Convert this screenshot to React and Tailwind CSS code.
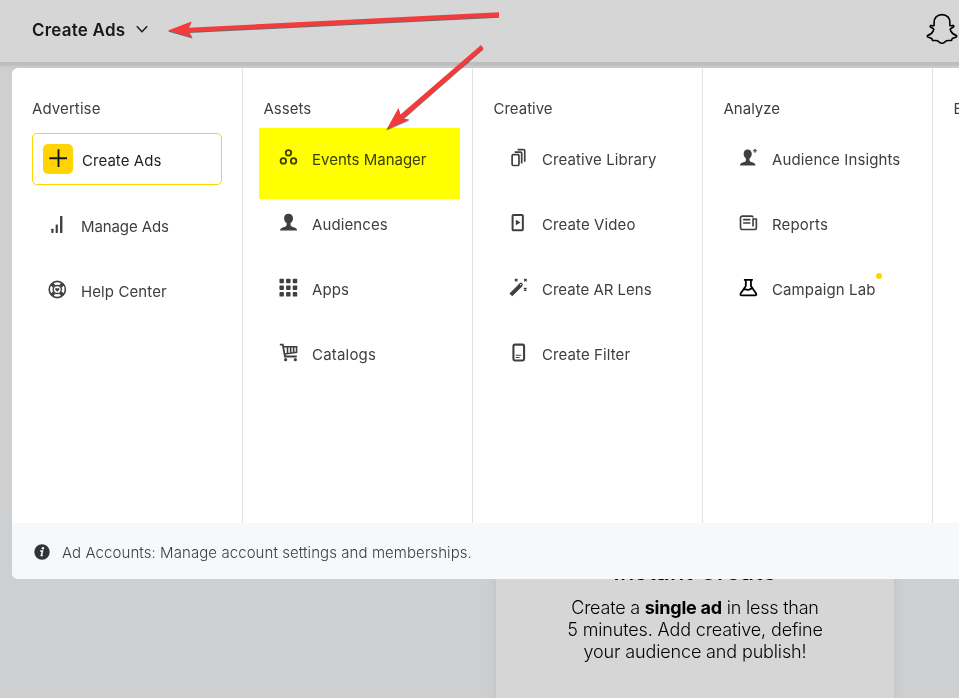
import React from "react";

const stroke = { fill: "none", stroke: "currentColor", strokeWidth: 1.6 };

function Icon({ children, className = "" }) {
  return (
    <svg viewBox="0 0 20 20" className={"h-[19px] w-5 shrink-0 " + className} fill="currentColor">
      {children}
    </svg>
  );
}

const BarsIcon = () => (
  <Icon>
    <rect x="4" y="14.6" width="2.300" height="4.400" rx=".5" />
    <rect x="8.600" y="10" width="2.300" height="9" rx=".5" />
    <rect x="13.200" y="1" width="2.500" height="18" rx=".6" />
  </Icon>
);

const HelpIcon = () => (
  <Icon>
    <circle cx="10.300" cy="10" r="8.500" {...stroke} strokeWidth="1.700" />
    <circle cx="10.300" cy="10" r="4.300" {...stroke} strokeWidth="1.500" />
    <path
      d="M4.600 4.300l2.300 2.300M16 4.300l-2.300 2.300M4.600 15.700l2.300-2.300M16 15.700l-2.300-2.300"
      stroke="currentColor"
      strokeWidth="3.800"
    />
    <path d="M10.300 12.400 8.200 10.200c-.8-1.300 1.200-2.400 2.100-1 .9-1.400 2.900-.3 2.100 1z" />
  </Icon>
);

const EventsIcon = () => (
  <Icon>
    <g {...stroke} strokeWidth="1.900">
      <circle cx="10.500" cy="5.100" r="2.900" />
      <circle cx="5.100" cy="13.600" r="2.900" />
      <circle cx="15.900" cy="13.600" r="2.900" />
    </g>
  </Icon>
);

const personPath =
  "M9.900 1c-3 0-4.600 1.900-4.600 4.700 0 2.300 1.100 4.200 2.600 5.200v2.100c0 .7-.4 1.200-1.100 1.500l-3.600 1.300C1.900 16.300 1.200 17.100 1 18.700h18c-.2-1.600-.9-2.400-2.200-2.900l-3.600-1.300c-.7-.3-1.100-.8-1.100-1.500v-2.100c1.500-1 2.600-2.900 2.600-5.200C14.600 2.900 12.900 1 9.900 1z";

const PersonIcon = () => (
  <Icon>
    <path d={personPath} transform="translate(.6 -.3)" />
  </Icon>
);

const InsightsIcon = () => (
  <Icon>
    <path d={personPath} transform="translate(.6 .6) scale(.91 .95)" />
    <path d="M17.300.7v4.400M15.100 2.900h4.400" stroke="currentColor" strokeWidth="1.300" />
  </Icon>
);

const AppsIcon = () => (
  <Icon>
    {[0.8, 7.8, 14.8].map((y) =>
      [1, 8, 15].map((x) => <rect key={x + "-" + y} x={x} y={y} width="4.700" height="4.700" rx=".9" />)
    )}
  </Icon>
);

const CartIcon = () => (
  <Icon>
    <path d="M1.400 1.700h3.100l2.300 12.500h12.400" {...stroke} strokeWidth="1.900" />
    <path d="M5 4h14v5.800L6.200 11.600M9.500 4v6.600M12.800 4v6.200M15.900 4v5.800" {...stroke} strokeWidth="1.700" />
    <circle cx="7.500" cy="17.600" r="1.700" />
    <circle cx="17.700" cy="17.600" r="1.700" />
  </Icon>
);

const LibraryIcon = () => (
  <Icon>
    <g {...stroke} strokeWidth="1.800">
      <rect x="3.800" y="7" width="7.200" height="11.400" rx="1.200" />
      <path d="M6.500 4.400h6.100c.8 0 1.300.4 1.300 1.200v10.600" />
      <path d="M9.600 1.700h6.200c.8 0 1.300.4 1.300 1.200v11.600" />
    </g>
  </Icon>
);

const VideoIcon = () => (
  <Icon>
    <rect x="4.300" y="2" width="10.800" height="16.200" rx="1" {...stroke} strokeWidth="2.100" />
    <path d="M7.700 7.200v5.800l5-2.900z" />
  </Icon>
);

const WandIcon = () => (
  <Icon>
    <path d="M2.500 17.700 13.300 7" stroke="currentColor" strokeWidth="4.200" />
    <path d="M11 7.200l2-1.900 1.700 1.600-2 2z" fill="#fff" stroke="currentColor" strokeWidth="1.100" />
    <path
      d="M6.800.9l2.600 2.600M9.400.9 6.800 3.500M16.500.9l2.600 2.600M19.100.9l-2.600 2.600M16.300 10.600l2.600 2.600M18.900 10.600l-2.600 2.600"
      stroke="currentColor"
      strokeWidth="1.400"
    />
  </Icon>
);

const FilterIcon = () => (
  <Icon>
    <rect x="5.200" y="1.700" width="11.200" height="16.700" rx="1.500" {...stroke} strokeWidth="2.200" />
    <path d="M7.700 13h5.600M7.700 15.300h4" stroke="currentColor" strokeWidth="1.100" />
  </Icon>
);

const ReportsIcon = () => (
  <Icon>
    <g {...stroke} strokeWidth="1.700" transform="translate(0 .6)">
      <path d="M15.300 4.200c0-1-.6-1.500-1.500-1.500H4.200c-1.300 0-2.100.8-2.100 2v10c0 1.300.8 2.100 2.100 2.100h12.600c1.300 0 2-.7 2-2V5.700h-3.500v8" />
      <path d="M4.900 6.400h7.600M4.900 9.900h7.600" />
    </g>
  </Icon>
);

const FlaskIcon = () => (
  <Icon className="text-black">
    <path
      d="M5.700 1.900h9.400M7.700 2v6.400L2.300 16.200c-.7 1.200-.2 2.100 1.100 2.100h14c1.300 0 1.800-.9 1.100-2.100l-5.400-7.800V2M5.800 12.400c1.800-1.300 3 .1 4.600 0 1.400-.1 2.100-1.600 4.100-1.500"
      {...stroke}
      strokeWidth="1.900"
    />
  </Icon>
);

const columns = [
  {
    title: "Assets",
    items: [
      { label: "Events Manager", icon: EventsIcon },
      { label: "Audiences", icon: PersonIcon, track: "tracking-[0.1px]" },
      { label: "Apps", icon: AppsIcon, track: "tracking-[0.1px]" },
      { label: "Catalogs", icon: CartIcon, track: "tracking-[0.2px]" },
    ],
  },
  {
    title: "Creative",
    items: [
      { label: "Creative Library", icon: LibraryIcon, track: "tracking-[0.1px]" },
      { label: "Create Video", icon: VideoIcon, track: "tracking-[0.1px]" },
      { label: "Create AR Lens", icon: WandIcon },
      { label: "Create Filter", icon: FilterIcon, track: "tracking-[0.1px]" },
    ],
  },
  {
    title: "Analyze",
    items: [
      { label: "Audience Insights", icon: InsightsIcon, track: "tracking-[0.12px]" },
      { label: "Reports", icon: ReportsIcon, track: "tracking-[0.15px]" },
      { label: "Campaign Lab", icon: FlaskIcon, track: "tracking-[0.1px]", dot: true },
    ],
  },
];

function MenuItem({ label, icon: Glyph, track = "", dot }) {
  return (
    <li className="flex h-[65px] items-center pl-[15px]">
      <span className="flex pb-1">
        <Glyph />
      </span>
      <span className={"relative mt-0.5 ml-[14px] whitespace-nowrap " + track}>
        {label}
        {dot && <span className="absolute -top-[6px] -right-[7px] h-1.5 w-1.5 rounded-full bg-[#ffd400]" />}
      </span>
    </li>
  );
}

function Column({ title, items }) {
  return (
    <section className="w-[230px] shrink-0 border-r border-[#e1e3e5] pl-5 pt-[30px]">
      <h2 className="h-[29px] pl-[0.5px] leading-[21px]">{title}</h2>
      <ul>
        {items.map((item) => (
          <MenuItem key={item.label} {...item} />
        ))}
      </ul>
    </section>
  );
}

function Arrow({ className, points, viewBox }) {
  return (
    <svg className={"pointer-events-none absolute drop-shadow-[0.5px_1px_0.5px_rgba(0,0,0,0.5)] " + className} viewBox={viewBox}>
      <polygon points={points} fill="#f43b3b" />
    </svg>
  );
}

export default function App() {
  return (
    <div className="relative flex h-[698px] w-[959px] flex-col overflow-hidden bg-[#cecfd1] font-['Inter','Liberation_Sans',sans-serif] text-[15px] text-[#3c4043]">
      <header className="z-0 flex h-[62px] shrink-0 items-center bg-[#d6d6d6] pl-8 shadow-[0_3px_0_#bbbdbc,0_3px_5px_#b4b6b5]">
        <span className="mb-px text-[17px] font-semibold tracking-[0.22px] text-[#16191c]">Create Ads</span>
        <svg className="mb-[5px] ml-[11px] h-2 w-3" viewBox="0 0 12 8" fill="none" stroke="#16191c" strokeWidth="1.400">
          <path d="M.8 1.200 6 6.700l5.200-5.500" />
        </svg>
        <svg className="mr-px mb-[5px] ml-auto h-8 w-8" viewBox="0 0 32 32" fill="none" stroke="#000" strokeWidth="1.600" strokeLinejoin="round">
          <path d="M16 1.600c-5.100 0-7.900 3.500-7.900 7.700v3.200c-.9.5-2.100.1-3.200-.1-.9.300-1 1.100-.3 1.600l2.800 1.700c.6.500.4 1.300 0 2-1.200 2.400-3 4.100-5.600 4.700-.8.400-.7 1-.1 1.500l4 1.500.8 2.100c1.600.2 3.400-.4 5 .3 1.500.8 2.500 2.400 4.500 2.400s3-1.600 4.500-2.400c1.600-.7 3.400-.1 5-.3l.8-2.100 4-1.500c.6-.5.7-1.100-.1-1.500-2.600-.6-4.400-2.300-5.600-4.700-.4-.7-.6-1.500 0-2l2.800-1.700c.7-.5.6-1.300-.3-1.600-1.100.2-2.300.6-3.200.1V9.300c0-4.200-2.800-7.700-7.900-7.700z" />
        </svg>
      </header>

      <main className="flex flex-1 flex-col pl-[496px] pt-[480px]">
        <article className="h-[200px] w-[398px] bg-[#d6d6d6] text-center text-black shadow-[0_0_1px_#bbbdbd,0_0_9px_#c0c2c2]">
          <h1 className="mt-4 text-[24px] leading-7 font-medium tracking-[0.15px]">Instant Create</h1>
          <p className="mt-[11px] text-[18px] leading-[22px] font-light tracking-[-0.14px]">
            <span className="tracking-[-0.22px]">
              Create a <b className="font-bold">single ad</b> in less than
            </span>
            <br />5 minutes. Add creative, define
            <br />
            your audience and publish!
          </p>
        </article>
      </main>

      <nav className="absolute top-[68px] right-0 bottom-[119px] left-3 flex flex-col overflow-hidden rounded-l-md bg-white">
        <div className="flex h-[455px] shrink-0">
          <section className="w-[231px] shrink-0 border-r border-[#e1e3e5] pr-5 pl-5 pt-[30px]">
            <h2 className="h-[35px] leading-[21px] tracking-[0.1px]">Advertise</h2>
            <button className="flex h-[52px] w-[190px] items-center rounded-[5px] border border-[#ffd400] pl-2.5 text-[#1c2023]">
              <span className="flex h-[30px] w-[30px] justify-center rounded-[5px] bg-[#ffd400] pt-[5px]">
                <svg className="h-[18px] w-[18px]" viewBox="0 0 18 18" stroke="#16191c" strokeWidth="1.900">
                  <path d="M9.500.3v17.700M.3 9.200h17.700" />
                </svg>
              </span>
              <span className="mt-1 ml-[9px] tracking-[0.05px]">Create Ads</span>
            </button>
            <ul className="mt-[9px]">
              <MenuItem label="Manage Ads" icon={BarsIcon} track="tracking-[-0.1px]" />
              <MenuItem label="Help Center" icon={HelpIcon} track="tracking-[0.1px]" />
            </ul>
          </section>
          {columns.map((column) => (
            <Column key={column.title} {...column} />
          ))}
          <section className="pl-5 pt-[30px]">
            <h2 className="pl-[0.5px] leading-[21px] whitespace-nowrap">Business</h2>
          </section>
        </div>
        <footer className="flex flex-1 items-center bg-[#f7f8fa] pl-[22px]">
          <svg className="mt-px h-4 w-4" viewBox="0 0 16 16">
            <circle cx="8" cy="8" r="7.700" fill="#303438" />
            <circle cx="8.900" cy="4.200" r="1.200" fill="#fff" />
            <path d="M6.200 6.900h2.300l-1.200 4.600h1.500" fill="none" stroke="#fff" strokeWidth="1.500" />
          </svg>
          <p className="mt-1 ml-3 whitespace-nowrap font-light tracking-[0.075px]">
            Ad Accounts: Manage account settings and memberships.
          </p>
        </footer>
      </nav>

      <div className="absolute top-[128px] left-[259px] h-[71px] w-[201px] bg-[#ffff00] mix-blend-multiply" />
      <Arrow
        className="top-[5px] left-[160px] h-[40px] w-[345px]"
        viewBox="160 5 345 40"
        points="168,30.500 191.500,21.500 188.500,27.700 499,12.300 499,16.700 189,32 192.500,37.500"
      />
      <Arrow
        className="top-[40px] left-[380px] h-[95px] w-[110px]"
        viewBox="380 40 110 95"
        points="386.500,129.500 398.500,108 400.500,114.500 481,45 483.500,48.500 403.500,118.500 409.500,119.500"
      />
    </div>
  );
}
